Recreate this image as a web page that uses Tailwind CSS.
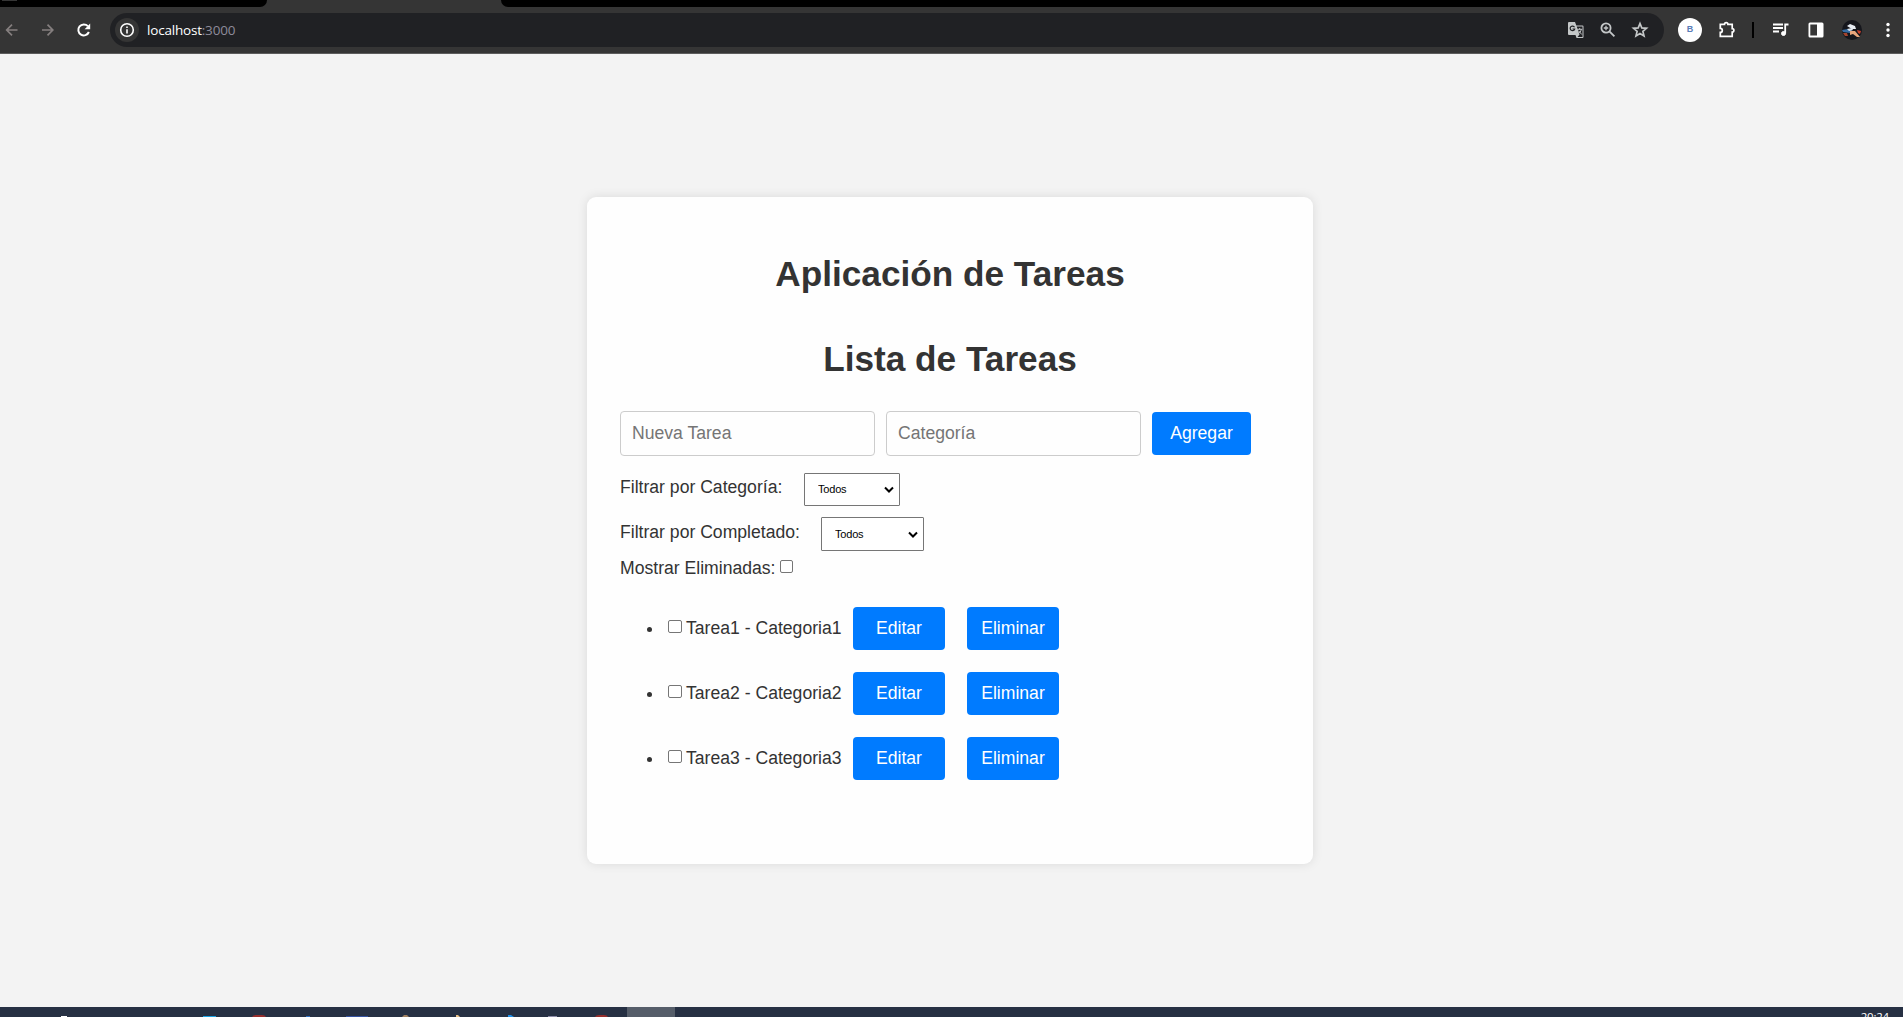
<!DOCTYPE html>
<html lang="es">
<head>
<meta charset="utf-8">
<title>Aplicación de Tareas</title>
<script src="https://cdn.jsdelivr.net/npm/@tailwindcss/browser@4"></script>
</head>
<body class="flex h-screen flex-col overflow-hidden bg-[#f3f3f3] font-['Liberation_Sans',Arial,sans-serif] text-[17.6px] text-[#333]">

<!-- Tab strip -->
<div class="flex h-[7px] shrink-0 bg-[#353535]">
  <div class="h-[7px] w-[267px] rounded-br-[8px] bg-black"><div class="ml-[2px] h-[1px] w-[15px] bg-[#353535]"></div></div>
  <div class="w-[234px]"></div>
  <div class="h-[7px] flex-1 rounded-bl-[8px] bg-black"></div>
</div>

<!-- Toolbar -->
<header class="flex h-[47px] shrink-0 items-start border-b border-[#5c5c5c] bg-[#353535] pt-[6px]">
  <div class="flex h-[34px] w-[110px] items-center text-white">
    <svg class="ml-[3px] h-[18px] w-[18px] text-[#857f7f]" viewBox="0 0 18 18" fill="none" stroke="currentColor" stroke-width="1.7"><path d="M14.5 9H4M9 3.7 3.7 9 9 14.3"/></svg>
    <svg class="ml-[18px] h-[18px] w-[18px] text-[#857f7f]" viewBox="0 0 18 18" fill="none" stroke="currentColor" stroke-width="1.7"><path d="M3 9h10.5M8.500 3.700 13.800 9 8.500 14.300"/></svg>
    <svg class="ml-[18px] h-[18px] w-[18px]" viewBox="0 0 18 18" fill="none" stroke="currentColor" stroke-width="2"><path d="M13.900 11A5.500 5.500 0 1 1 12.900 5.200"/><path d="M15.200 2.600v5.600H9.600z" fill="currentColor" stroke="none"/></svg>
  </div>
  <div class="flex h-[34px] w-[1554px] items-center rounded-full bg-[#202124] px-[5px]">
    <div class="flex h-6 w-6 items-center justify-center rounded-full bg-[#353535] text-white">
      <svg class="h-4 w-4" viewBox="0 0 16 16" fill="none" stroke="currentColor" stroke-width="1.600"><circle cx="8" cy="8" r="6.300"/><path d="M8 7.200v4.200M8 4.400v1.700"/></svg>
    </div>
    <div class="ml-[8px] font-['Open_Sans','Noto_Sans',sans-serif] text-[13.500px] tracking-[-0.200px] text-white">localhost<span class="text-[#8d8b9b]">:3000</span></div>
    <div class="ml-auto mr-[10px] flex items-center text-[#c4c7c8]">
      <svg class="h-[18px] w-[18px]" viewBox="0 0 18 18"><path d="M2 1h6l1.300 3.500H15.500a1 1 0 0 1 1 1V16a1 1 0 0 1-1 1H9.500L8.500 14H2a1 1 0 0 1-1-1V2a1 1 0 0 1 1-1z" fill="currentColor"/><path d="M9.700 5.500h5.800V16h-5l2-2.500z" fill="#202124"/><path d="M7.500 6.200A2.300 2.300 0 1 0 7.700 8H5.500" fill="none" stroke="#202124" stroke-width="1.200"/><path d="M10.200 8.300h5M12.700 7v1.300M14.300 8.500c-.5 2-1.800 3.500-3 4.300M11.500 9.700l3.300 3.800" fill="none" stroke="currentColor"/></svg>
      <svg class="ml-[14px] h-[18px] w-[18px]" viewBox="0 0 18 18" fill="none" stroke="currentColor" stroke-width="1.800"><circle cx="7" cy="7" r="4.600"/><path d="m10.400 10.400 5 5"/><path d="M4.800 7h4.400M7 4.800v4.400" stroke-width="1.300"/></svg>
      <svg class="ml-[14px] h-[18px] w-[18px]" viewBox="0 0 18 18" fill="none" stroke="currentColor" stroke-width="1.700"><path d="m9 2.500 1.800 4.400 4.700.4-3.600 3.100 1.100 4.600L9 12.500 5 15l1.100-4.600-3.600-3.100 4.700-.4z"/></svg>
    </div>
  </div>
  <div class="flex h-[34px] flex-1 items-center text-white">
    <div class="ml-[14px] flex h-6 w-6 items-center justify-center rounded-full bg-white text-[9px] font-bold text-[#5a7db8]">B</div>
    <svg class="ml-[16px] h-[18px] w-[18px]" viewBox="0 0 18 18" fill="none" stroke="currentColor" stroke-width="1.700"><path d="M2.300 3.300h4.200a1.700 1.700 0 0 1 3.400 0h4.300v4.300a1.700 1.700 0 0 1 0 3.400v4.400H2.300v-4a2 2 0 0 0 0-4z"/></svg>
    <div class="ml-[16px] h-4 w-[2px] bg-black"></div>
    <svg class="ml-[18px] h-[18px] w-[18px]" viewBox="0 0 18 18" fill="none" stroke="currentColor" stroke-width="1.800"><path d="M1 3.500h10M1 7h10M1 10.500h6M13.200 12.500V3.500h3.300"/><circle cx="11.500" cy="12.500" r="2" fill="currentColor" stroke-width="1"/></svg>
    <svg class="ml-[17px] h-[18px] w-[18px]" viewBox="0 0 18 18"><path d="M3 1.500h12A1.500 1.500 0 0 1 16.500 3v12a1.500 1.500 0 0 1-1.500 1.500H3A1.500 1.500 0 0 1 1.500 15V3A1.500 1.500 0 0 1 3 1.500z" fill="currentColor"/><path d="M3.300 3.500H10v11H3.300z" fill="#353535"/></svg>
    <svg class="ml-[17px] h-5 w-5" viewBox="0 0 20 20"><circle cx="10" cy="10" r="10" fill="#15161c"/><path d="M5 6l3-2 5 2 1 3-4 0z" fill="#e6ebf2"/><path d="M0 10l6-1 4 1-2 3-7-1z" fill="#356ca3"/><path d="M5 9l5-1 1 2-4 1z" fill="#dfe6ee"/><path d="M8 11l5 0 5 6-3 0-4-3-3 1z" fill="#e8a67c"/><path d="M1 13l4 0 1 3-3 0z" fill="#a5442d"/><path d="M15 10l4 1-1 3-2-1z" fill="#c9402c"/></svg>
    <svg class="ml-[17px] h-[18px] w-[18px]" viewBox="0 0 18 18" fill="currentColor"><circle cx="9" cy="3.500" r="1.700"/><circle cx="9" cy="9" r="1.700"/><circle cx="9" cy="14.500" r="1.700"/></svg>
  </div>
</header>

<!-- Page -->
<main class="min-h-0 flex-1 pt-[143px]">
  <section class="ml-[587px] h-[667px] w-[726px] rounded-[9px] bg-[#fefefe] px-[33px] pt-[57px] shadow-[0_0_11px_rgba(0,0,0,0.1)]">
    <h1 class="text-center text-[35.2px] leading-[40px] font-bold">Aplicación de Tareas</h1>
    <h1 class="mt-[45px] text-center text-[35.2px] leading-[40px] font-bold">Lista de Tareas</h1>

    <div class="mt-[32px] flex items-center">
      <input type="text" placeholder="Nueva Tarea" class="h-[45px] w-[255px] rounded-[4px] border border-[#ccc] px-[11px] placeholder:text-[#757575]">
      <input type="text" placeholder="Categoría" class="ml-[11px] h-[45px] w-[255px] rounded-[4px] border border-[#ccc] px-[11px] placeholder:text-[#757575]">
      <button class="ml-[11px] h-[43px] w-[99px] rounded-[4px] bg-[#007bff] text-white">Agregar</button>
    </div>

    <div class="mt-[17px] flex h-[33px]">
      <label class="w-[184px] pt-[4px] leading-5">Filtrar por Categoría:</label>
      <div class="relative h-[33px] w-[96px]">
        <select class="h-full w-full appearance-none rounded-[1px] border border-[#767676] bg-white pl-[13px] text-[11px] tracking-[-0.200px] text-black"><option>Todos</option></select>
        <svg class="pointer-events-none absolute top-[13px] right-[5px] h-2 w-3" viewBox="0 0 12 8" fill="none" stroke="#000" stroke-width="2"><path d="m2 1.500 4 4 4-4"/></svg>
      </div>
    </div>
    <div class="mt-[11px] flex h-[34px]">
      <label class="w-[201px] pt-[5px] leading-5">Filtrar por Completado:</label>
      <div class="relative h-[34px] w-[103px]">
        <select class="h-full w-full appearance-none rounded-[1px] border border-[#767676] bg-white pl-[13px] text-[11px] tracking-[-0.200px] text-black"><option>Todos</option></select>
        <svg class="pointer-events-none absolute top-[14px] right-[5px] h-2 w-3" viewBox="0 0 12 8" fill="none" stroke="#000" stroke-width="2"><path d="m2 1.500 4 4 4-4"/></svg>
      </div>
    </div>
    <div class="mt-[7px] flex h-5">
      <label class="w-[160px] whitespace-nowrap leading-5">Mostrar Eliminadas:</label>
      <input type="checkbox" class="mt-[2px] h-[13px] w-[13px] appearance-none rounded-[2px] border border-[#767676] bg-white">
    </div>

    <ul class="mt-[29px] flex flex-col gap-[22px]">
      <li class="flex h-[43px] items-center pl-[27px]">
        <span class="mt-[2px] h-[5px] w-[5px] rounded-full bg-[#333]"></span>
        <input type="checkbox" class="mb-[4px] ml-[16px] h-[13px] w-[14px] appearance-none rounded-[2px] border border-[#767676] bg-white">
        <span class="ml-[4px] w-[167px]">Tarea1 - Categoria1</span>
        <button class="h-[43px] w-[92px] rounded-[4px] bg-[#007bff] text-white">Editar</button>
        <button class="ml-[22px] h-[43px] w-[92px] rounded-[4px] bg-[#007bff] text-white">Eliminar</button>
      </li>
      <li class="flex h-[43px] items-center pl-[27px]">
        <span class="mt-[2px] h-[5px] w-[5px] rounded-full bg-[#333]"></span>
        <input type="checkbox" class="mb-[4px] ml-[16px] h-[13px] w-[14px] appearance-none rounded-[2px] border border-[#767676] bg-white">
        <span class="ml-[4px] w-[167px]">Tarea2 - Categoria2</span>
        <button class="h-[43px] w-[92px] rounded-[4px] bg-[#007bff] text-white">Editar</button>
        <button class="ml-[22px] h-[43px] w-[92px] rounded-[4px] bg-[#007bff] text-white">Eliminar</button>
      </li>
      <li class="flex h-[43px] items-center pl-[27px]">
        <span class="mt-[2px] h-[5px] w-[5px] rounded-full bg-[#333]"></span>
        <input type="checkbox" class="mb-[4px] ml-[16px] h-[13px] w-[14px] appearance-none rounded-[2px] border border-[#767676] bg-white">
        <span class="ml-[4px] w-[167px]">Tarea3 - Categoria3</span>
        <button class="h-[43px] w-[92px] rounded-[4px] bg-[#007bff] text-white">Editar</button>
        <button class="ml-[22px] h-[43px] w-[92px] rounded-[4px] bg-[#007bff] text-white">Eliminar</button>
      </li>
    </ul>
  </section>
</main>

<!-- Taskbar -->
<footer class="flex h-[10px] shrink-0 overflow-hidden bg-[#263043]">
  <svg class="h-[10px] w-[627px] shrink-0" viewBox="0 0 627 10">
    <path d="M61 10v-1h6v1z" fill="#fff"/><path d="M203 9h13v1h-13z" fill="#1ba1e2"/>
    <path d="M252 10q1-2 4-2h6q3 0 4 2z" fill="#962d2b"/><path d="M306 9h4v1h-4z" fill="#2f6fc0"/>
    <path d="M346 9h22v1h-22z" fill="#3452a0"/><path d="M402 10l2-2h3l2 2z" fill="#a08060"/>
    <path d="M456 8h2l2 2h-4z" fill="#e8c088"/><path d="M508 8h3l3 2h-6z" fill="#1f8fe8"/>
    <path d="M548 9h9v1h-9z" fill="#8c8ca8"/><path d="M595 10q1-2 4-2h5q3 0 4 2z" fill="#962d2b"/>
  </svg>
  <div class="w-[48px] bg-[#555d69]"></div>
  <div class="mr-[14px] ml-auto pt-[3px] font-['Open_Sans',sans-serif] text-[11.500px] leading-[14px] tracking-[-0.200px] text-white">20:24</div>
</footer>
</body>
</html>
